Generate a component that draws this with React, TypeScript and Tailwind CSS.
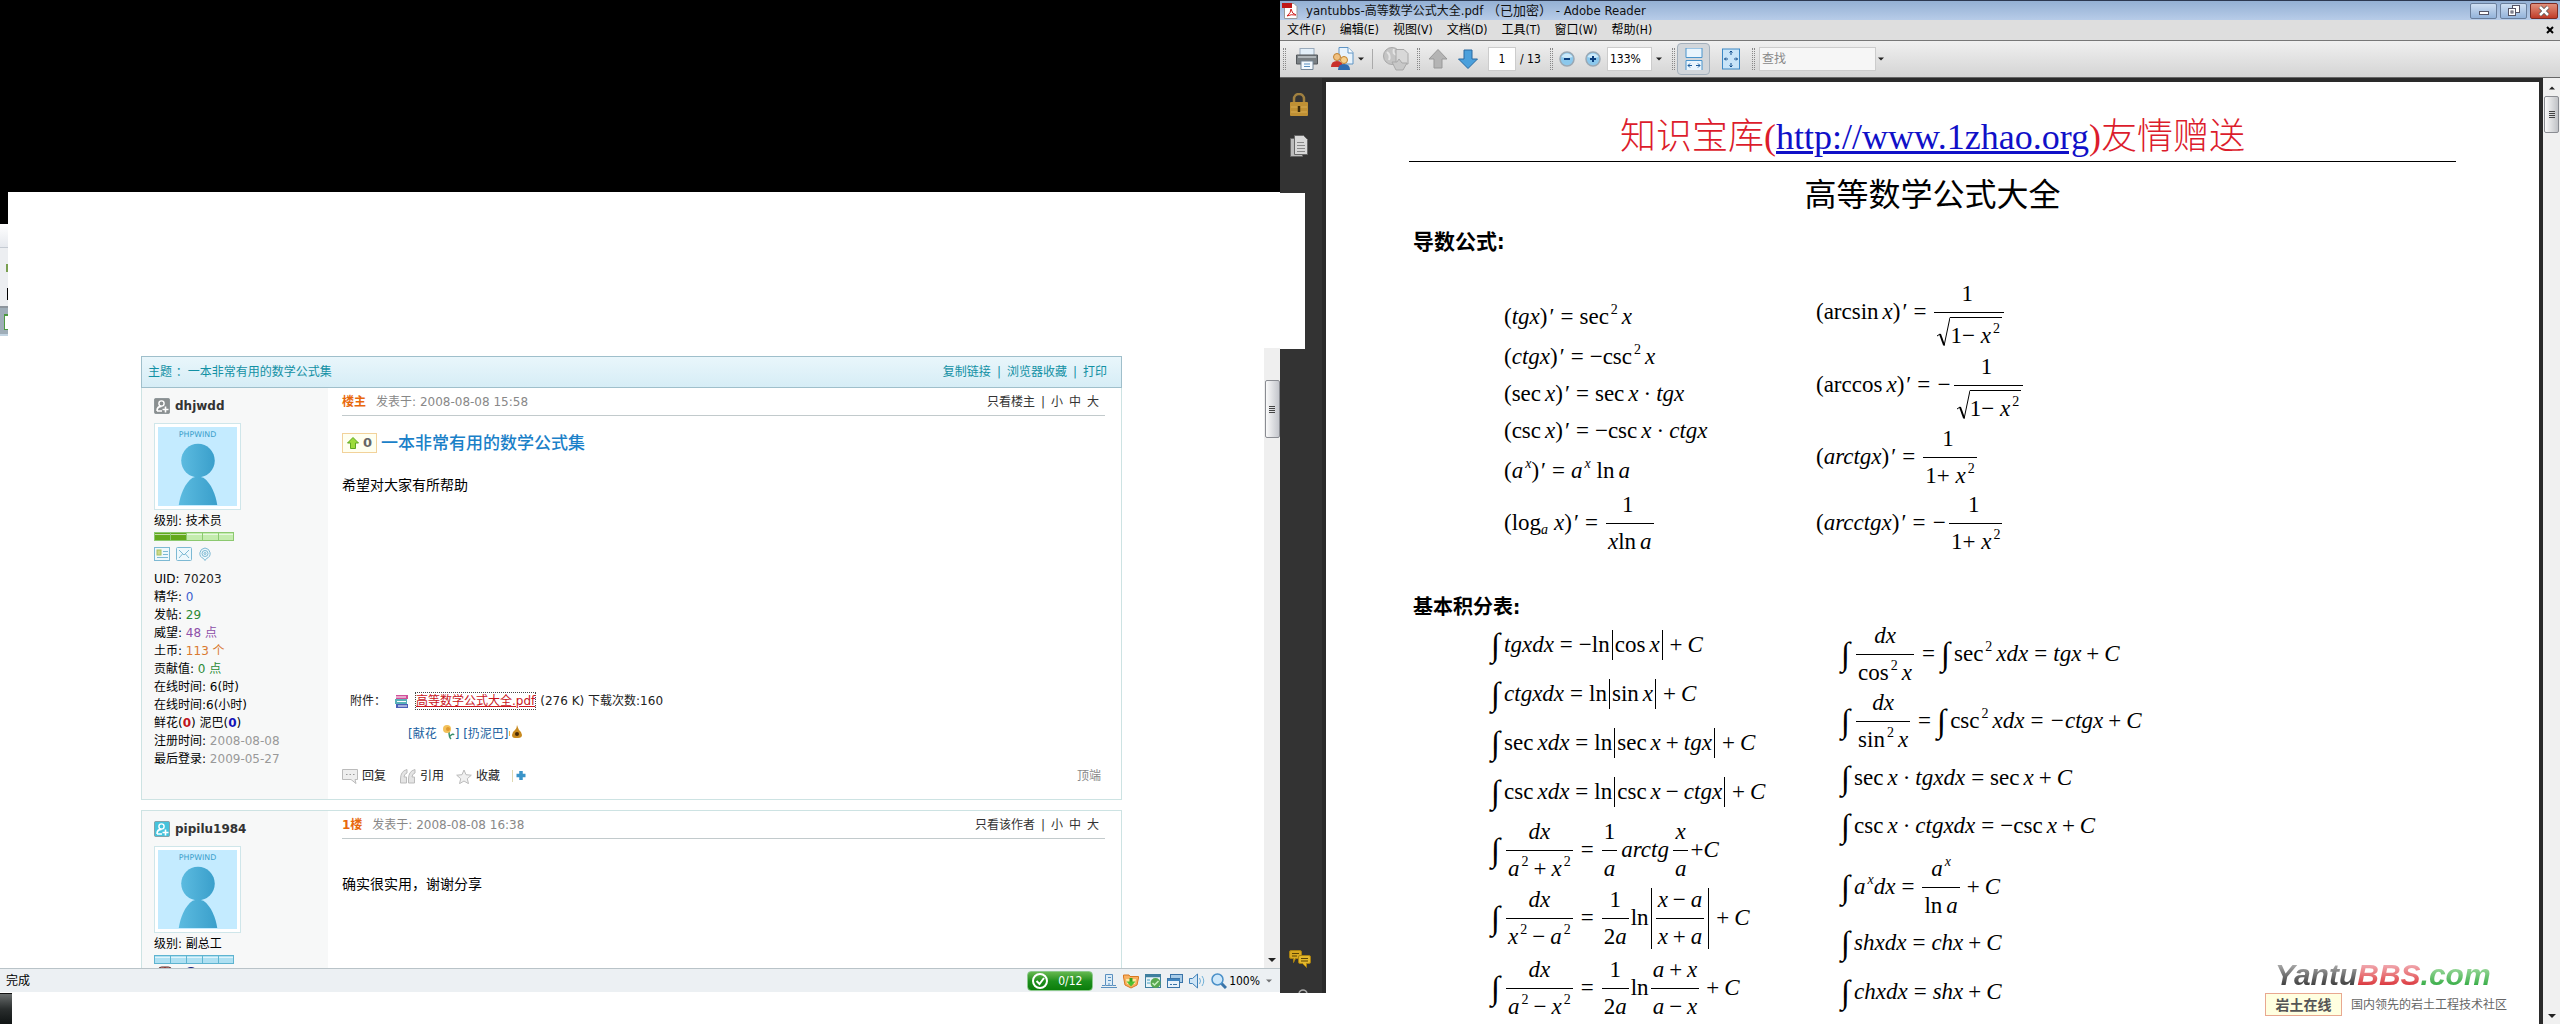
import type { ReactNode } from "react";

const uiFont = "font-['DejaVu_Sans_Condensed','DejaVu_Sans','Noto_Sans_CJK_SC',sans-serif]";

/* ---------- math ---------- */

const Rel = ({ children = "=" }: { children?: ReactNode }) => (
  <span className="mx-1.5 not-italic">{children}</span>
);

const Bin = ({ children = "+" }: { children?: ReactNode }) => (
  <span className="mx-[5px] not-italic">{children}</span>
);

const Fn = ({ children }: { children: ReactNode }) => (
  <span className="not-italic mr-1">{children}</span>
);

const Sup = ({ children, upright = true }: { children: ReactNode; upright?: boolean }) => (
  <sup className={`static align-[10px] text-[14px] ml-0.5 ${upright ? "not-italic" : "italic"}`}>
    {children}
  </sup>
);

const Int = () => <span className="not-italic text-[33px] leading-none mr-1">∫</span>;

const Prime = () => <span className="not-italic ml-0.5">′</span>;

const Frac = ({ num, den, tall }: { num: ReactNode; den: ReactNode; tall?: boolean }) => (
  <span className="flex flex-col items-stretch text-center mx-0.5">
    <span className={`flex items-end justify-center pb-1.5 border-b border-black ${tall ? "h-[36px]" : "h-[31px]"}`}>
      <span>{num}</span>
    </span>
    <span className={tall ? "h-[35px] px-0.5 pt-1" : "h-[30px] px-0.5 pt-1.5"}>{den}</span>
  </span>
);

const Sqrt = ({ children }: { children: ReactNode }) => (
  <span className="flex h-[30px] items-stretch">
    <svg viewBox="0 0 14 30" className="w-3.5 h-[30px]" fill="none" stroke="#000">
      <path d="M1 19l3-2" />
      <path d="M4 17l4 11" strokeWidth="2" />
      <path d="M8 29l6-28.5" />
    </svg>
    <span className="border-t border-black pt-1.5 pr-0.5">{children}</span>
  </span>
);

const Abs = ({ children }: { children: ReactNode }) => (
  <span className="flex items-center border-x border-black min-h-[30px] px-0.5 mx-0.5">{children}</span>
);

const Row = ({ h, children }: { h: string; children: ReactNode }) => (
  <li className={`flex items-center whitespace-nowrap ${h}`}>{children}</li>
);

const MathList = ({ children, className }: { children: ReactNode; className: string }) => (
  <ul className={`font-['Liberation_Serif',serif] italic text-[23px] leading-6 text-black ${className}`}>
    {children}
  </ul>
);

const Derivatives = () => (
  <div className="flex pl-[95px] pr-4">
    <MathList className="w-[312px] pt-[22px]">
      <Row h="h-10">
        <span><span className="not-italic">(</span>tgx<span className="not-italic">)</span><Prime /><Rel /><Fn>sec<Sup>2</Sup></Fn>x</span>
      </Row>
      <Row h="h-10">
        <span><span className="not-italic">(</span>ctgx<span className="not-italic">)</span><Prime /><Rel /><Fn>−csc<Sup>2</Sup></Fn>x</span>
      </Row>
      <Row h="h-[34px]">
        <span><Fn>(sec</Fn>x<span className="not-italic">)</span><Prime /><Rel /><Fn>sec</Fn>x<Bin>·</Bin>tgx</span>
      </Row>
      <Row h="h-10">
        <span><Fn>(csc</Fn>x<span className="not-italic">)</span><Prime /><Rel /><Fn>−csc</Fn>x<Bin>·</Bin>ctgx</span>
      </Row>
      <Row h="h-10">
        <span><span className="not-italic">(</span>a<Sup upright={false}>x</Sup><span className="not-italic">)</span><Prime /><Rel />a<Sup upright={false}>x</Sup> <Fn>ln</Fn>a</span>
      </Row>
      <Row h="h-16">
        <span><span className="not-italic">(log</span><sub className="text-[14px] mr-1.5">a</sub>x<span className="not-italic">)</span><Prime /><Rel /></span>
        <Frac num={<Fn>1</Fn>} den={<>x<Fn>ln</Fn>a</>} />
      </Row>
    </MathList>
    <MathList className="">
      <Row h="h-[74px]">
        <span><Fn>(arcsin</Fn>x<span className="not-italic">)</span><Prime /><Rel /></span>
        <Frac tall num={<Fn>1</Fn>} den={<Sqrt><span className="not-italic">1−</span> x<Sup>2</Sup></Sqrt>} />
      </Row>
      <Row h="h-[72px]">
        <span><Fn>(arccos</Fn>x<span className="not-italic">)</span><Prime /><Rel />−</span>
        <Frac tall num={<Fn>1</Fn>} den={<Sqrt><span className="not-italic">1−</span> x<Sup>2</Sup></Sqrt>} />
      </Row>
      <Row h="h-[72px]">
        <span><span className="not-italic">(</span>arctgx<span className="not-italic">)</span><Prime /><Rel /></span>
        <Frac num={<Fn>1</Fn>} den={<><span className="not-italic">1+</span> x<Sup>2</Sup></>} />
      </Row>
      <Row h="h-[60px]">
        <span><span className="not-italic">(</span>arcctgx<span className="not-italic">)</span><Prime /><Rel />−</span>
        <Frac num={<Fn>1</Fn>} den={<><span className="not-italic">1+</span> x<Sup>2</Sup></>} />
      </Row>
    </MathList>
  </div>
);

const PlusC = () => <span><Bin />C</span>;

const Integrals = () => (
  <div className="flex pl-[82px] pr-4">
    <MathList className="w-[350px]">
      <Row h="h-[50px]">
        <Int /><span>tgxdx<Rel /><span className="not-italic">−ln</span></span><Abs><span><Fn>cos</Fn>x</span></Abs><PlusC />
      </Row>
      <Row h="h-12">
        <Int /><span>ctgxdx<Rel /><span className="not-italic">ln</span></span><Abs><span><Fn>sin</Fn>x</span></Abs><PlusC />
      </Row>
      <Row h="h-[50px]">
        <Int /><span><Fn>sec</Fn>xdx<Rel /><span className="not-italic">ln</span></span><Abs><span><Fn>sec</Fn>x<Bin />tgx</span></Abs><PlusC />
      </Row>
      <Row h="h-12">
        <Int /><span><Fn>csc</Fn>xdx<Rel /><span className="not-italic">ln</span></span><Abs><span><Fn>csc</Fn>x<Bin>−</Bin>ctgx</span></Abs><PlusC />
      </Row>
      <Row h="h-[68px]">
        <Int /><Frac num="dx" den={<>a<Sup>2</Sup><Bin />x<Sup>2</Sup></>} /><Rel />
        <Frac num={<span className="not-italic">1</span>} den="a" /><span className="mx-0.5">arctg</span>
        <Frac num="x" den="a" /><span><span className="not-italic">+</span>C</span>
      </Row>
      <Row h="h-[68px]">
        <Int /><Frac num="dx" den={<>x<Sup>2</Sup><Bin>−</Bin>a<Sup>2</Sup></>} /><Rel />
        <Frac num={<span className="not-italic">1</span>} den={<><span className="not-italic">2</span>a</>} /><span className="not-italic">ln</span>
        <Abs><Frac num={<>x<Bin>−</Bin>a</>} den={<>x<Bin />a</>} /></Abs><PlusC />
      </Row>
      <Row h="h-[72px]">
        <Int /><Frac num="dx" den={<>a<Sup>2</Sup><Bin>−</Bin>x<Sup>2</Sup></>} /><Rel />
        <Frac num={<span className="not-italic">1</span>} den={<><span className="not-italic">2</span>a</>} /><span className="not-italic">ln</span>
        <Frac num={<>a<Bin />x</>} den={<>a<Bin>−</Bin>x</>} /><PlusC />
      </Row>
    </MathList>
    <MathList className="">
      <Row h="h-[68px]">
        <Int /><Frac num="dx" den={<><Fn>cos<Sup>2</Sup></Fn>x</>} /><Rel />
        <Int /><span><Fn>sec<Sup>2</Sup></Fn>xdx<Rel />tgx<Bin />C</span>
      </Row>
      <Row h="h-[66px]">
        <Int /><Frac num="dx" den={<><Fn>sin<Sup>2</Sup></Fn>x</>} /><Rel />
        <Int /><span><Fn>csc<Sup>2</Sup></Fn>xdx<Rel />−ctgx<Bin />C</span>
      </Row>
      <Row h="h-12"><Int /><span><Fn>sec</Fn>x<Bin>·</Bin>tgxdx<Rel /><Fn>sec</Fn>x<Bin />C</span></Row>
      <Row h="h-12"><Int /><span><Fn>csc</Fn>x<Bin>·</Bin>ctgxdx<Rel /><Fn>−csc</Fn>x<Bin />C</span></Row>
      <Row h="h-[74px]">
        <Int /><span>a<Sup upright={false}>x</Sup>dx<Rel /></span>
        <Frac num={<>a<Sup upright={false}>x</Sup></>} den={<><Fn>ln</Fn>a</>} /><PlusC />
      </Row>
      <Row h="h-[38px]"><Int /><span>shxdx<Rel />chx<Bin />C</span></Row>
      <Row h="h-[60px]"><Int /><span>chxdx<Rel />shx<Bin />C</span></Row>
    </MathList>
  </div>
);

/* ---------- forum ---------- */

const UserIcon = ({ color }: { color: string }) => (
  <svg viewBox="0 0 16 16" className="size-4">
    <rect x=".5" y=".5" width="15" height="15" rx="1" fill={color} stroke="#6f7c80" strokeOpacity=".6" />
    <circle cx="7.5" cy="5.5" r="2.6" fill="none" stroke="#fff" strokeWidth="1.4" />
    <path d="M3 13c0-3 2-4.600 4.500-4.600M3 13h5M11.500 8.500v6M8.500 11.500h6" fill="none" stroke="#fff" strokeWidth="1.600" />
  </svg>
);

const Avatar = () => (
  <div className="w-[87px] border border-[#cfe6ea] bg-white p-[3px]">
    <svg viewBox="0 0 80 80" className="w-full" role="img" aria-label="avatar">
      <defs>
        <linearGradient id="body">
          <stop offset="0" stopColor="#5cbbe0" />
          <stop offset="1" stopColor="#3a9fcb" />
        </linearGradient>
      </defs>
      <rect width="80" height="80" fill="#c4ebff" />
      <text x="40" y="10.500" textAnchor="middle" fontSize="8" fill="#3a9fcb" fontFamily="DejaVu Sans">PHPWIND</text>
      <circle cx="40.500" cy="34" r="17" fill="url(#body)" />
      <path d="M21 79c1.500-10 6-22 14-27.500q5.500-2 11 0C54 57 58.500 69 60 79z" fill="url(#body)" />
    </svg>
  </div>
);

const Level = ({ fill, rest, line, full }: { fill: string; rest: string; line: string; full?: boolean }) => (
  <svg viewBox="0 0 80 9" className="w-20 h-[9px]">
    <rect x=".5" y=".5" width="79" height="8" fill={rest} stroke={line} />
    {!full && <rect x="1" y="1" width="31" height="7" fill={fill} />}
    <path d="M1 2.500h78" stroke="#fff" strokeOpacity=".6" />
    <path d="M16.500 1v7M32.500 1v7M48.500 1v7M64.500 1v7" stroke={line} />
  </svg>
);

const ContactIcons = () => (
  <div className="flex gap-1.5 text-[#7db9d3]">
    <svg viewBox="0 0 16 14" className="w-4 h-3.5" fill="none" stroke="currentColor">
      <rect x=".5" y=".5" width="15" height="13" fill="#eef8fc" />
      <path d="M9 4.500h5M9 7.500h5M3 10.500h11" />
      <rect x="3" y="3" width="4" height="5" fill="#cdd98a" stroke="#a8c060" />
    </svg>
    <svg viewBox="0 0 16 14" className="w-4 h-3.5" fill="none" stroke="currentColor">
      <rect x=".5" y=".5" width="15" height="13" rx="1" fill="#eef8fc" />
      <path d="M3 3l5 5 5-5M3 11l3.500-4M13 11L9.500 7" />
    </svg>
    <svg viewBox="0 0 14 14" className="size-3.5" fill="none" stroke="currentColor">
      <path d="M7 1a6 5.500 0 0 1 1.500 10.500L7 13.500l-1.500-2A6 5.500 0 0 1 7 1z" fill="#eef8fc" />
      <circle cx="7" cy="6.500" r="3" />
      <circle cx="7" cy="6.500" r="1" />
    </svg>
  </div>
);

type PostProps = {
  user: string;
  iconColor: string;
  level: string;
  bar: ReactNode;
  extra: ReactNode;
  floor: string;
  time: string;
  only: string;
  children: ReactNode;
};

const Post = ({ user, iconColor, level, bar, extra, floor, time, only, children }: PostProps) => (
  <article className="flex h-full text-xs">
    <aside className="w-[186px] shrink-0 bg-[#f7f8f8] pl-3 pt-[9px] text-black">
      <div className="flex items-center gap-[5px] h-[18px] font-bold text-[#333]">
        <UserIcon color={iconColor} />
        <a href="#user">{user}</a>
      </div>
      <div className="pt-2 pb-0.5"><Avatar /></div>
      <p className="leading-[18px]">级别: {level}</p>
      <div className="pt-0.5">{bar}</div>
      {extra}
    </aside>
    <div className="flex grow flex-col pl-3.5 pr-4">
      <header className="flex h-[28px] items-center justify-between border-b border-[#c2cacc] pr-1.5">
        <span className="text-[#888]">
          <b className="mr-2.5 text-[#e8680c]">{floor}</b>发表于: {time}
        </span>
        <nav className="flex text-[#333]">
          <a href="#only">{only}</a>
          <span className="mx-1.5">|</span>
          <a href="#s" className="mr-1.5">小</a>
          <a href="#m" className="mr-1.5">中</a>
          <a href="#l">大</a>
        </nav>
      </header>
      {children}
    </div>
  </article>
);

const stats = [
  ["UID: ", "70203", "text-[#222]"],
  ["精华: ", "0", "text-[#3a5fd0]"],
  ["发帖: ", "29", "text-[#2a8a35]"],
  ["威望: ", "48 点", "text-[#8d4fa8]"],
  ["土币: ", "113 个", "text-[#d97a30]"],
  ["贡献值: ", "0 点", "text-[#2a8a35]"],
];

const Forum = () => (
  <div className="grow overflow-hidden pl-[141px] pr-[142px] pt-2 font-['DejaVu_Sans','Noto_Sans_CJK_SC',sans-serif]">
    <div className="flex h-8 items-center justify-between border border-[#9fbfcb] bg-linear-to-b from-[#e9f6fb] to-[#d6edf6] pl-1.5 pr-3.5 text-xs text-[#1290a4]">
      <span>主题 ：一本非常有用的数学公式集</span>
      <nav className="flex">
        <a href="#copy">复制链接</a><span className="mx-1.5">|</span>
        <a href="#fav">浏览器收藏</a><span className="mx-1.5">|</span>
        <a href="#print">打印</a>
      </nav>
    </div>
    <section className="h-[412px] border border-t-0 border-[#cde3e3]">
      <Post
        user="dhjwdd"
        iconColor="#8a8f90"
        level="技术员"
        bar={<Level fill="#63a81c" rest="#c4ecae" line="#8cc970" />}
        floor="楼主"
        time="2008-08-08 15:58"
        only="只看楼主"
        extra={
          <>
            <div className="pt-1.5 pb-[9px]"><ContactIcons /></div>
            <ul className="leading-[18px]">
              {stats.map(([label, value, color]) => (
                <li key={label}>{label}<span className={color}>{value}</span></li>
              ))}
              <li>在线时间: 6(时)</li>
              <li>在线时间:6(小时)</li>
              <li>鲜花(<b className="text-[#c0141c]">0</b>) 泥巴(<b className="text-[#1414b8]">0</b>)</li>
              <li>注册时间: <span className="text-[#999]">2008-08-08</span></li>
              <li>最后登录: <span className="text-[#999]">2009-05-27</span></li>
            </ul>
          </>
        }
      >
        <div className="flex items-center pt-[17px] gap-1">
          <button className="flex h-5 w-[35px] items-center justify-center gap-1 border border-[#f2d29a] bg-[#fffff0] text-[13px] font-bold text-[#666]">
            <svg viewBox="0 0 12 12" className="size-3"><path d="M6 .5L11.500 6H8.500v5.500h-5V6H.5z" fill="#9ddb3a" stroke="#5fa51e" /></svg>
            0
          </button>
          <h1 className="text-[17px] leading-5 font-medium text-[#1a80c8]">一本非常有用的数学公式集</h1>
        </div>
        <p className="pt-[22px] text-sm leading-5 text-black">希望对大家有所帮助</p>
        <div className="mt-auto flex items-center pl-2 text-[#222]">
          <span>附件：</span>
          <svg viewBox="0 0 15 15" className="ml-2 mr-1.5 size-[15px]">
            <path d="M2 1h12v4H2z" fill="#d0509a" /><path d="M1 5h12v5H1z" fill="#58b0b8" /><path d="M2 10h12v4H2z" fill="#4a5fb8" />
            <path d="M2 3h10M3 7.500h9M4 12h9" stroke="#fff" />
          </svg>
          <a href="#pdf" className="mr-1 border border-dotted border-[#444] text-[#c8141c] underline leading-4">高等数学公式大全.pdf</a>
          <span>(276 K) 下载次数:160</span>
        </div>
        <div className="flex items-center pl-[66px] pt-3.5 text-[#1a5fa0] leading-5">
          <button>[献花</button>
          <svg viewBox="0 0 14 16" className="ml-1 mb-1 h-4 w-3.5">
            <path d="M8 8q0 5 2 7M9 12q3-3 4-1" fill="none" stroke="#3a8f6a" strokeWidth="1.500" />
            <circle cx="6" cy="5" r="4" fill="#f3c15a" /><circle cx="7" cy="5" r="2" fill="#e09a30" />
          </svg>
          <button>] [扔泥巴]</button>
          <svg viewBox="0 0 14 16" className="mb-1 h-4 w-3.5">
            <path d="M8 1q1 3 2 5 3 2 3 5t-4 3H6q-3 0-3-3t3-5q2-2 2-5z" fill="#c88a20" />
            <circle cx="8" cy="10" r="2" fill="#4a2c08" /><path d="M.5 7v5" stroke="#f0b040" />
          </svg>
        </div>
        <div className="flex items-center pb-[13px] pt-[22px] text-[#222] leading-5">
          <svg viewBox="0 0 16 15" className="mr-1 h-[15px] w-4" fill="#eee" stroke="#bbb">
            <path d="M.5.5h15v10H13l1 4-5-4H.5z" /><path d="M4 5.500h1.500M7.500 5.500H9M11 5.500h1.500" stroke="#999" />
          </svg>
          <button>回复</button>
          <svg viewBox="0 0 16 15" className="ml-3.5 mr-1 h-[15px] w-4" fill="#e4e4e4" stroke="#bbb">
            <path d="M7 .5Q.5 2 .5 10v4h6V8H4q0-3 3-4zM15 .5Q8.500 2 8.500 10v4h6V8H12q0-3 3-4z" />
          </svg>
          <button>引用</button>
          <svg viewBox="0 0 16 15" className="ml-3 mr-1 h-[15px] w-4" fill="#f0f0f0" stroke="#bbb">
            <path d="M8 1l2 4.700 5.300.500-4 3.500 1.200 5L8 12l-4.500 2.700 1.200-5-4-3.500L6 5.700z" />
          </svg>
          <button>收藏</button>
          <svg viewBox="0 0 14 12" className="ml-3 h-3 w-3.5">
            <path d="M.5 0v12" stroke="#e0d8b0" /><path d="M9 1v9M4.500 5.500h9" stroke="#3a94c8" strokeWidth="3.500" />
          </svg>
          <a href="#top" className="ml-auto pr-1 text-[#888]">顶端</a>
        </div>
      </Post>
    </section>
    <section className="mt-2.5 h-[412px] border border-[#cde3e3]">
      <Post
        user="pipilu1984"
        iconColor="#45c3dc"
        level="副总工"
        bar={<Level full fill="#aee0f2" rest="#aee0f2" line="#5fb4d0" />}
        floor="1楼"
        time="2008-08-08 16:38"
        only="只看该作者"
        extra={
          <svg viewBox="0 0 50 16" className="mt-0.5 h-4 w-[50px]">
            <rect x="4.500" y="1" width="13" height="14" rx="3" fill="#e88a80" stroke="#503030" />
            <path d="M8 4h6M11 1v9" stroke="#802018" />
            <circle cx="37" cy="8" r="7" fill="#14207a" /><path d="M37 3v8" stroke="#fff" strokeWidth="2" />
          </svg>
        }
      >
        <p className="pt-[35px] text-sm leading-5 text-black">确实很实用，谢谢分享</p>
      </Post>
    </section>
  </div>
);

const ArrowDown = ({ className = "w-2" }: { className?: string }) => (
  <svg viewBox="0 0 8 4" className={`h-1 ${className}`}><path d="M0 0h8L4 4z" fill="#222" /></svg>
);

const StatusBar = () => (
  <footer className={`flex h-6 shrink-0 items-center border-t border-[#b9c3c8] bg-[#ecf0f3] pl-1.5 pr-2 text-xs text-black ${uiFont}`}>
    <span className="grow">完成</span>
    <button className="flex h-5 w-[66px] items-center gap-2.5 rounded border border-[#8cc98c] bg-linear-to-b from-[#63b84e] via-[#1c8f1c] to-[#0a7d0a] pl-1 text-white">
      <svg viewBox="0 0 16 16" className="size-4" fill="none" stroke="#fff" strokeWidth="2"><circle cx="8" cy="8" r="7" /><path d="M4.500 8l3 3 4.500-6" /></svg>
      0/12
    </button>
    <div className="ml-2 flex items-center gap-1.5">
      <svg viewBox="0 0 16 16" className="size-4" fill="#dcecf8" stroke="#5a90c0">
        <path d="M4.500 1.500h7v11h-7zM0 14.500h16M1 12.500h3M12 12.500h3" /><path d="M7 4.500h3M7 7.500h3M8 10v2" />
      </svg>
      <svg viewBox="0 0 16 16" className="size-4">
        <path d="M.5 4V2H6l1 1.500h8.500V5L14 12 8 15l-6-3z" fill="#f8b060" stroke="#d87820" />
        <path d="M3 6h10l-1 5H4z" fill="#ffe9a0" /><path d="M8 5v4" stroke="#3aa020" strokeWidth="3" /><path d="M3.500 8.500h9L8 13.500z" fill="#4cc030" />
      </svg>
      <svg viewBox="0 0 16 16" className="size-4">
        <rect x=".5" y="1.500" width="15" height="13" fill="#e8f4f8" stroke="#3f7f9f" /><path d="M0 3h16" stroke="#3f7f9f" strokeWidth="2.500" />
        <path d="M2 7h3M2 10h3" stroke="#4a9fc0" /><circle cx="10.500" cy="10" r="5" fill="#58a850" /><path d="M7.500 10l2 2 4-4" stroke="#c8f0c0" fill="none" strokeWidth="1.500" />
      </svg>
      <svg viewBox="0 0 16 16" className="size-4" fill="#a8cce8" stroke="#3a74a8">
        <rect x="3.500" y="1.500" width="12" height="8" /><rect x=".5" y="5.500" width="12" height="9" fill="#e8f2fa" />
        <path d="M1 7h12" stroke="#3f85c0" strokeWidth="2" /><path d="M3 11.500h2M6 11.500h4" />
      </svg>
      <svg viewBox="0 0 16 16" className="size-4" fill="#cfe5f6" stroke="#3f80b8">
        <path d="M.5 5.500h3L8.500 1v14l-5-4.500h-3z" /><path d="M10.500 5q2 3 0 6M13 3q3.500 5 0 10" fill="none" stroke="#6fb0d8" />
      </svg>
      <svg viewBox="0 0 16 16" className="size-4" fill="none">
        <path d="M10 10l5 5" stroke="#3a74a8" strokeWidth="3" /><circle cx="6.500" cy="6.500" r="5.500" fill="#cfe8fa" stroke="#4a90c8" strokeWidth="1.500" />
      </svg>
    </div>
    <span className="ml-0.5">100%</span>
    <ArrowDown className="ml-1.5 w-1.5 opacity-60" />
  </footer>
);

const Browser = () => (
  <main className="flex h-screen w-1/2 flex-col bg-white">
    <div className="h-48 shrink-0 bg-black" />
    <div className="flex h-[156px] shrink-0">
      <div className="flex w-2 flex-col">
        <div className="h-8 bg-black" />
        <div className="h-6 bg-linear-to-b from-white to-[#e6e9ee] border-b border-[#c4cad2]" />
        <div className="flex h-[60px] flex-col items-end border-b-2 border-[#8d959d] bg-[#eceef1]">
          <span className="mt-4 h-2 w-0.5 bg-[#7aa050]" />
          <span className="mt-4 h-3 w-px bg-black" />
        </div>
        <div className="h-7 border-b-2 border-[#c2d4e2] bg-[#9fadb8] pt-1.5 pl-1">
          <span className="block h-4 border border-r-0 border-t-2 border-[#4c9a40] bg-white" />
        </div>
      </div>
    </div>
    <div className="flex min-h-0 grow">
      <Forum />
      <div className="flex w-4 shrink-0 flex-col items-center bg-[#efefef] pt-8">
        <div className="flex h-[58px] w-[15px] flex-col items-center justify-center gap-px rounded-xs border border-[#8a8c92] bg-linear-to-r from-[#fafafa] to-[#c4c6cc]">
          <span className="h-px w-1.5 bg-[#444]" /><span className="h-px w-1.5 bg-[#444]" /><span className="h-px w-1.5 bg-[#444]" /><span className="h-px w-1.5 bg-[#444]" />
        </div>
        <ArrowDown className="mt-auto mb-1.5 w-2" />
      </div>
    </div>
    <StatusBar />
    <div className="h-8 shrink-0 pt-px">
      <div className="h-full w-3 border-t border-[#111] bg-linear-to-b from-[#6a6e6e] via-[#2a2e2e] via-50% to-[#101414]" />
    </div>
  </main>
);

/* ---------- reader ---------- */

const Grip = () => (
  <span className="flex h-[22px] gap-px">
    <span className="border-l border-dotted border-[#888]" />
    <span className="border-l border-dotted border-[#888]" />
  </span>
);

const TitleBar = () => (
  <header className="flex h-5 items-center border-t border-[#2c3850] bg-linear-to-b from-[#94b0d4] to-[#b7cce8] pl-0.5 pr-0.5 text-xs text-[#111]">
    <svg viewBox="0 0 16 16" className="size-4">
      <path d="M2.500.5H12l3 3v12H2.500z" fill="#fff" stroke="#999" /><rect width="10" height="5" fill="#c01818" />
      <path d="M5 13q4-3 4-7 1 5 5 6-5-1-9 1z" fill="none" stroke="#d02020" />
    </svg>
    <h2 className="grow pl-2 text-[13px] leading-4 whitespace-pre">
      yantubbs-<span className="text-xs">高等数学公式大全</span>.pdf （已加密） - Adobe Reader
    </h2>
    <div className="flex gap-[3px]">
      <button aria-label="minimize" className="flex h-4 w-[27px] items-center justify-center rounded-xs border border-[#6a7f9c] bg-linear-to-b from-[#cfdff2] to-[#93b3da]">
        <svg viewBox="0 0 12 12" className="size-3"><rect x="1.500" y="6.500" width="9" height="3" fill="#fff" stroke="#556" /></svg>
      </button>
      <button aria-label="restore" className="flex h-4 w-[27px] items-center justify-center rounded-xs border border-[#6a7f9c] bg-linear-to-b from-[#cfdff2] to-[#93b3da]">
        <svg viewBox="0 0 12 12" className="size-3" fill="#fff" stroke="#556"><rect x="4.500" y=".5" width="7" height="7" /><rect x=".5" y="3.500" width="7" height="7" /><rect x="3" y="6" width="2" height="2" /></svg>
      </button>
      <button aria-label="close" className="flex h-4 w-[28px] items-center justify-center rounded-xs border border-[#7c2a22] bg-linear-to-b from-[#e0907c] to-[#c03a28]">
        <svg viewBox="0 0 12 12" className="size-3"><path d="M2 2l8 8M10 2l-8 8" stroke="#555" strokeWidth="4" /><path d="M2 2l8 8M10 2l-8 8" stroke="#fff" strokeWidth="2.500" /></svg>
      </button>
    </div>
  </header>
);

const menus = ["文件(F)", "编辑(E)", "视图(V)", "文档(D)", "工具(T)", "窗口(W)", "帮助(H)"];

const MenuBar = () => (
  <nav className="flex h-[21px] items-center gap-[14px] border-b border-[#777] bg-[#dedede] pb-px pl-[7px] pr-1.5 text-xs text-black">
    {menus.map((m) => <button key={m}>{m}</button>)}
    <button aria-label="close document" className="ml-auto">
      <svg viewBox="0 0 8 8" className="size-2"><path d="M1 1l6 6M7 1L1 7" stroke="#000" strokeWidth="2" /></svg>
    </button>
  </nav>
);

const ToolArrow = ({ up }: { up?: boolean }) => (
  <svg viewBox="0 0 20 20" className="size-5">
    {up ? (
      <path d="M10 .5L19 10h-5v9H6v-9H1z" fill="#b4b4b4" stroke="#999" />
    ) : (
      <path d="M10 19.500L.5 10H6V1h8v9h5.500z" fill="#4ba0dc" stroke="#2868a0" />
    )}
  </svg>
);

const ZoomIcon = ({ plus }: { plus?: boolean }) => (
  <svg viewBox="0 0 16 16" className="size-4">
    <circle cx="8" cy="8" r="7" fill="#8cc8ec" stroke="#9aa8b4" strokeWidth="1.500" />
    <path d="M2.500 6a6 6 0 0 1 11 0q-5.500 2-11 0z" fill="#cdeafa" />
    <path d={plus ? "M5 8h6M8 5v6" : "M5 8h6"} stroke="#0c4080" strokeWidth="2" />
  </svg>
);

const Toolbar = () => (
  <div className="flex h-[37px] items-center border-b border-[#666] bg-linear-to-b from-[#f0f0f0] to-[#d4d4d4] pl-[3px] text-xs text-black">
    <Grip />
    <button aria-label="print" className="ml-2.5">
      <svg viewBox="0 0 22 22" className="size-[22px]">
        <rect x="4" y="0.500" width="14" height="8" fill="#e4f0fa" stroke="#9ab" /><path d="M.5 7h21v9h-21z" fill="#7a8084" stroke="#54585c" />
        <path d="M2 9h18" stroke="#b0b6ba" strokeWidth="2" /><path d="M5 13h12v8.500H5z" fill="#f4faff" stroke="#789" /><path d="M8 16h6M8 18.500h6" stroke="#5a90c0" />
      </svg>
    </button>
    <button aria-label="collaborate" className="ml-3 flex items-center gap-1">
      <svg viewBox="0 0 24 24" className="size-6">
        <path d="M9 .5h9l5 5V17H9z" fill="#e8f3fc" stroke="#5f94c4" /><path d="M18 .5V6h5" fill="#fff" stroke="#5f94c4" />
        <circle cx="7" cy="10" r="3.500" fill="#f0c080" stroke="#c08030" /><path d="M1 20q0-6 6-6t6 6z" fill="#c8302c" />
        <circle cx="14" cy="13" r="3.500" fill="#f6d08c" stroke="#c08030" /><path d="M8 23q0-6 6-6t6 6z" fill="#2f6cb0" />
      </svg>
      <ArrowDown className="w-1.5" />
    </button>
    <span className="ml-2 h-5 w-px bg-[#aaa]" />
    <svg viewBox="0 0 26 24" className="ml-2.5 h-6 w-[26px]" fill="#c4c4c4" stroke="#a8a8a8">
      <circle cx="9" cy="9" r="8.500" /><path d="M4 5q4 3 2 8M11 2q-2 5 3 6" fill="none" stroke="#e4e4e4" strokeWidth="2" /><path d="M13 2.500h8l4 4V17H13z" fill="#d8d8d8" />
      <path d="M9 15h5l2-3 3 4h5l-4 7h-7z" fill="#c8c8c8" />
    </svg>
    <div className="ml-2"><Grip /></div>
    <button aria-label="previous page" className="ml-2"><ToolArrow up /></button>
    <button aria-label="next page" className="ml-2.5"><ToolArrow /></button>
    <input aria-label="page" defaultValue="1" className="ml-2.5 h-6 w-7 border border-[#ccc] bg-white text-center" />
    <span className="ml-1 w-6">/ 13</span>
    <div className="ml-1.5"><Grip /></div>
    <button aria-label="zoom out" className="ml-1.5"><ZoomIcon /></button>
    <button aria-label="zoom in" className="ml-2.5"><ZoomIcon plus /></button>
    <input aria-label="zoom" defaultValue="133%" className="ml-1.5 mr-1 h-6 w-[45px] border border-[#ccc] bg-white pl-0.5" />
    <ArrowDown className="w-1.5" />
    <div className="ml-2.5"><Grip /></div>
    <button aria-label="fit width" className="ml-0.5 flex h-8 w-[33px] items-center justify-center rounded border border-[#a4b0bc] bg-[#d2d6da]">
      <svg viewBox="0 0 18 22" className="h-[22px] w-[18px]" fill="#eaf5fd" stroke="#4a94cc">
        <path d="M1 0h16v9.500H1zM1 22v-9.500h16V22" /><path d="M3 17.500h4M11 17.500h4M5 15.500l-2 2 2 2M13 15.500l2 2-2 2" stroke="#1c5c9c" fill="none" />
      </svg>
    </button>
    <button aria-label="fit page" className="ml-3 mr-3">
      <svg viewBox="0 0 18 22" className="h-[22px] w-[18px]" fill="#c8e4f8" stroke="#3c88c4">
        <rect x=".5" y="1" width="17" height="20" /><path d="M9 3v4M9 15v4M2.500 11H6M12 11h3.500M7.500 4.500L9 3l1.500 1.500M7.500 17.500L9 19l1.500-1.500M4 9.500L2.500 11 4 12.500M14 9.500l1.500 1.500-1.500 1.500" stroke="#104c8c" fill="none" />
      </svg>
    </button>
    <Grip />
    <input aria-label="查找" placeholder="查找" className="ml-1 mr-0.5 h-6 w-[117px] border border-[#ccc] bg-[#f6f6f6] pl-0.5 placeholder:text-[#888]" />
    <ArrowDown className="w-1.5" />
  </div>
);

const Sidebar = () => (
  <div className="flex w-[46px] shrink-0 flex-col bg-white">
    <div className="flex h-[915px] w-full flex-col border-r-4 border-[#2a2a2a] bg-[#333]">
      <div className="flex flex-col gap-[19px] pl-2.5 pt-[15px] h-[115px]">
        <svg viewBox="0 0 18 23" className="h-[23px] w-[18px]">
          <path d="M4 10V6a5 5 0 0 1 10 0v4" fill="none" stroke="#a08040" strokeWidth="2.500" /><rect y="9" width="18" height="14" rx="1" fill="#bf9034" />
          <path d="M1 14h16M1 19h16" stroke="#d8ac50" /><path d="M9 13v6" stroke="#3c2a08" strokeWidth="2.500" />
        </svg>
        <svg viewBox="0 0 18 22" className="h-[22px] w-[18px]" fill="#bbb" stroke="#666">
          <path d="M.5 3.500h12v18H.5z" /><path d="M4.500.5h9l4 4v15h-13z" fill="#d8d8d8" /><path d="M7 7.500h7M7 10.500h8M7 13.500h8M7 16.500h8" stroke="#888" />
        </svg>
      </div>
      <div className="h-[156px] w-[25px] bg-white" />
      <div className="mt-auto flex flex-col gap-5 pl-2">
        <svg viewBox="0 0 24 20" className="h-5 w-6" fill="#d8a820" stroke="#a88010">
          <path d="M3 1.500h9q1.500 0 1.500 1.500v5q0 1.500-1.500 1.500H7.500l-2 4v-4H3Q1.500 9.500 1.500 8V3Q1.500 1.500 3 1.500z" />
          <path d="M12 6.500h9q1.500 0 1.500 1.500v5q0 1.500-1.500 1.500h-2.500v4l-4-4H12q-1.500 0-1.500-1.500V8q0-1.500 1.500-1.500z" fill="#e4b82c" />
          <path d="M4 4.500h7M4 7h5M13 9.500h7M13 12h7" stroke="#5c4404" />
        </svg>
        <svg viewBox="0 0 24 4" className="h-1 w-6"><path d="M11 4q1-3 4-3t4 3" fill="none" stroke="#aaa" strokeWidth="1.500" /></svg>
      </div>
    </div>
  </div>
);

const Watermark = () => (
  <div className="absolute bottom-2 right-[53px]">
    <p className="pl-2.5 font-['Liberation_Sans',sans-serif] text-[30px] leading-9 font-bold italic">
      <span className="bg-linear-to-b from-[#aaa] from-20% to-[#444] to-80% bg-clip-text text-transparent">Yantu</span>
      <span className="bg-linear-to-b from-[#f0a8b0] from-20% to-[#dc3c44] to-80% bg-clip-text text-transparent">BBS</span>
      <span className="bg-linear-to-b from-[#a8e0a8] from-20% to-[#3cb04c] to-80% bg-clip-text text-transparent">.com</span>
    </p>
    <div className="flex items-center gap-[9px] text-xs text-[#666]">
      <b className="flex h-[23px] w-[77px] items-center justify-center border border-[#e8a890] bg-[#ffffe0] text-sm text-[#555]">岩土在线</b>
      国内领先的岩土工程技术社区
    </div>
  </div>
);

const Reader = () => (
  <section className={`flex h-screen w-1/2 flex-col overflow-hidden ${uiFont}`}>
    <TitleBar />
    <MenuBar />
    <Toolbar />
    <div className="relative flex min-h-0 grow">
      <Sidebar />
      <div className="flex min-w-0 grow border-t-4 border-r-4 border-[#2a2a2a] bg-white">
        <div className="grow overflow-hidden pl-[83px] pr-[83px] pt-6">
          <p className="flex h-[56px] items-center justify-center border-b border-black pt-1.5 font-['Liberation_Serif','Noto_Sans_CJK_SC',serif] text-[36px] font-light text-[#dc1c2c]">
            知识宝库(<a href="http://www.1zhao.org" className="text-[#1010c8] underline">http://www.1zhao.org</a>)友情赠送
          </p>
          <h1 className="pt-2.5 text-center text-[32px] leading-[46px] text-black">高等数学公式大全</h1>
          <h2 className="pl-1 pt-2 text-[21px] leading-8 font-bold text-black">导数公式:</h2>
          <div className="pt-[17px]"><Derivatives /></div>
          <h2 className="pl-1 pt-9 pb-px text-[20px] leading-8 font-bold text-black">基本积分表:</h2>
          <div className="-mt-1"><Integrals /></div>
        </div>
      </div>
      <div className="flex w-[17px] shrink-0 flex-col items-center bg-[#f0f0f0] pt-2">
        <ArrowDown className="w-1.5 rotate-180" />
        <div className="mt-1.5 flex h-[37px] w-[15px] flex-col items-center justify-center gap-px rounded-xs border border-[#8a8c92] bg-linear-to-r from-[#fafafa] to-[#c0c2c6]">
          <span className="h-px w-1.5 bg-[#444]" /><span className="h-px w-1.5 bg-[#444]" /><span className="h-px w-1.5 bg-[#444]" /><span className="h-px w-1.5 bg-[#444]" />
        </div>
        <ArrowDown className="mt-auto mb-1.5 w-2" />
      </div>
      <Watermark />
    </div>
  </section>
);

export default function App() {
  return (
    <div className="flex h-screen w-full overflow-hidden bg-white">
      <Browser />
      <Reader />
    </div>
  );
}
